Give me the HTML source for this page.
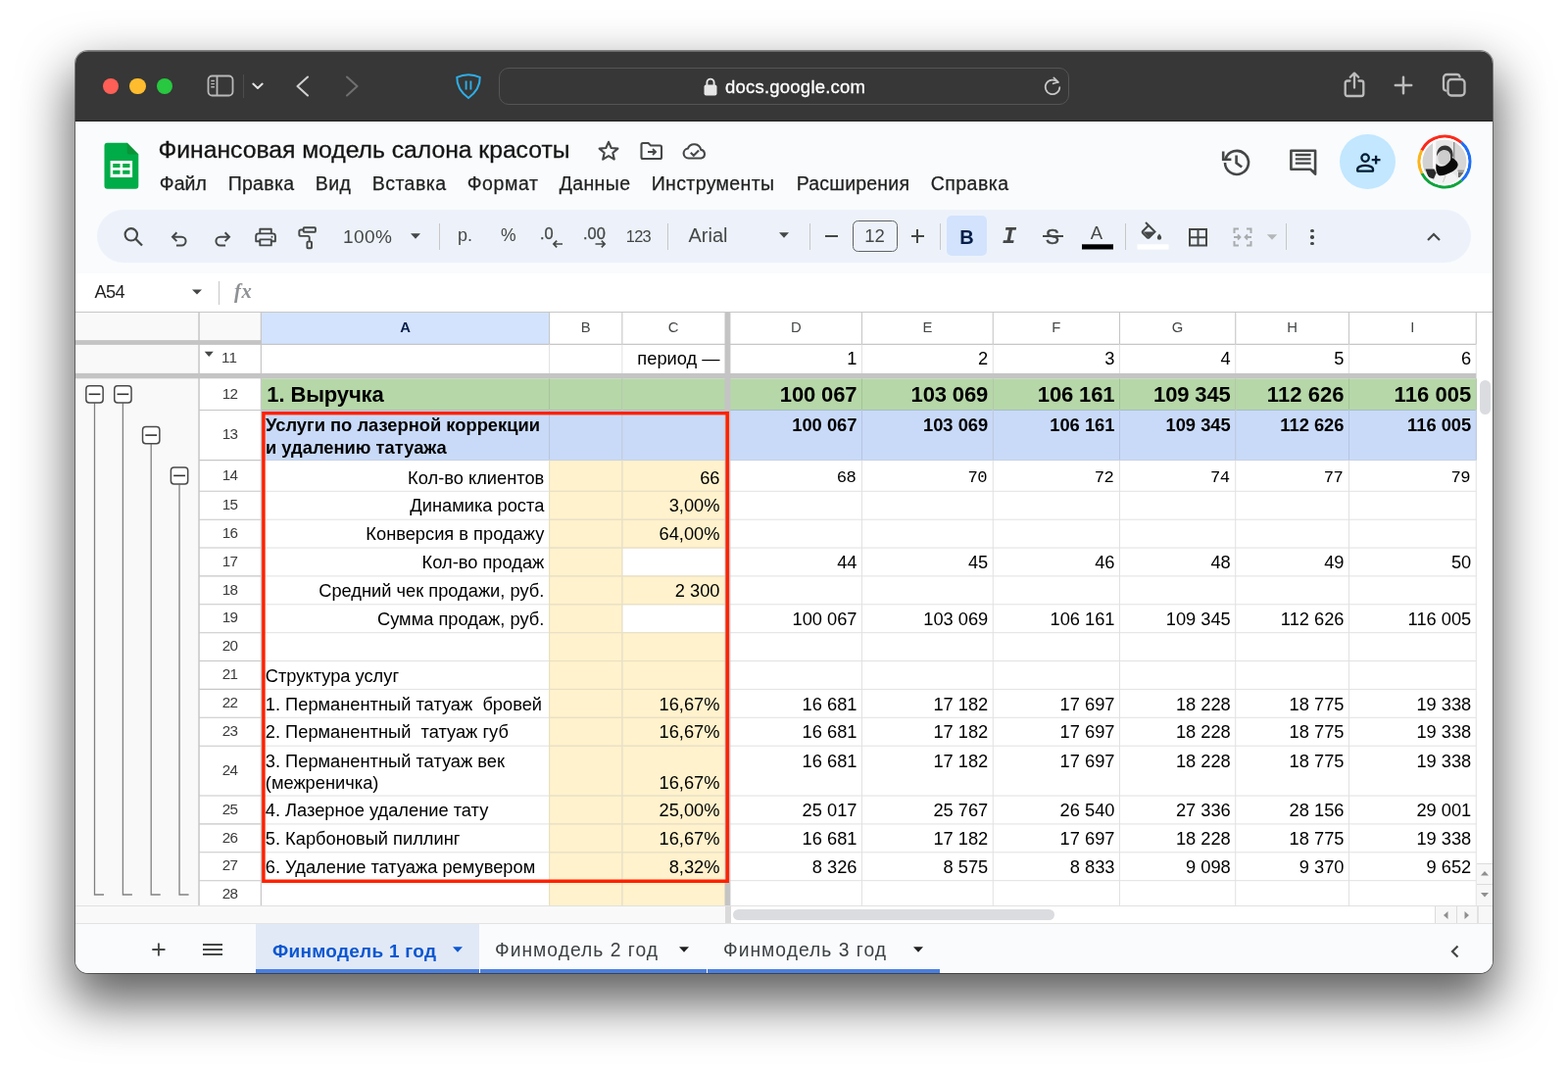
<!DOCTYPE html>
<html lang="ru"><head><meta charset="utf-8"><title>Финансовая модель салона красоты</title>
<style>
html,body{margin:0;padding:0;background:#fff}
body{width:1600px;height:1095px;position:relative;overflow:hidden;font-family:"Liberation Sans",sans-serif;}
.r{position:absolute;display:block}
.t{position:absolute;white-space:pre;color:#000}
#shadow{position:absolute;left:77px;top:52px;width:1446px;height:941px;border-radius:13px;background:#f9fbfd;box-shadow:0 0 0 1px rgba(0,0,0,.42),0 25.500px 52px 4.600px rgba(0,0,0,.62);}
#win{will-change:transform;position:absolute;left:0;top:0;width:1600px;height:1095px;clip-path:inset(52px 77px 102px 77px round 13px);}
</style></head><body>
<div id="shadow"></div>
<div id="win">
<div class="r" style="left:77px;top:52px;width:1446px;height:72px;background:#363736;"></div>
<div class="r" style="left:77px;top:123px;width:1446px;height:1px;background:#1f1f1f;"></div>
<div class="r" style="left:77px;top:52px;width:1446px;height:1px;background:#6a6b6a;"></div>
<div class="r" style="left:104.6px;top:79.85px;width:16.3px;height:16.3px;background:#fe5f57;border-radius:50%;"></div>
<div class="r" style="left:132.25px;top:79.85px;width:16.3px;height:16.3px;background:#febc2e;border-radius:50%;"></div>
<div class="r" style="left:159.6px;top:79.85px;width:16.3px;height:16.3px;background:#28c840;border-radius:50%;"></div>
<svg class="r" style="left:210px;top:75px;" width="30" height="25" viewBox="0 0 30 25"><rect x="2.5" y="2.5" width="25" height="20" rx="4" fill="none" stroke="#b9b9b9" stroke-width="1.8"/><path d="M11.5 2.5v20" stroke="#b9b9b9" stroke-width="1.8"/><path d="M5.3 7.5h3.6M5.3 10.6h3.6M5.3 13.7h3.6" stroke="#b9b9b9" stroke-width="1.4"/></svg>
<div class="r" style="left:248px;top:76px;width:1px;height:24px;background:#4b4c4b;"></div>
<svg class="r" style="left:255px;top:81px;" width="16" height="14" viewBox="0 0 16 14"><path d="M3.3 4.6L8 9l4.700-4.400" fill="none" stroke="#e4e4e4" stroke-width="2" stroke-linecap="round" stroke-linejoin="round"/></svg>
<svg class="r" style="left:298px;top:74px;" width="24" height="28" viewBox="0 0 24 28"><path d="M16 4.5L5.5 14 16 23.5" fill="none" stroke="#d0d0d0" stroke-width="2.1" stroke-linecap="round" stroke-linejoin="round"/></svg>
<svg class="r" style="left:347px;top:74px;" width="24" height="28" viewBox="0 0 24 28"><path d="M7 4.5L17.5 14 7 23.5" fill="none" stroke="#6e6f6e" stroke-width="2.1" stroke-linecap="round" stroke-linejoin="round"/></svg>
<svg class="r" style="left:462px;top:72px;" width="32" height="32" viewBox="0 0 32 32"><path d="M16 4.2c4.2 0 8 .9 11.7 2.6.3 7.6-3.3 15-11.7 21.2C7.6 21.8 4 14.4 4.3 6.8 8 5.1 11.8 4.2 16 4.2z" fill="none" stroke="#2eaee8" stroke-width="2"/><path d="M13.6 10.5v9M18.4 10.5v9" stroke="#2eaee8" stroke-width="1.9"/></svg>
<div class="r" style="left:509px;top:69px;width:582px;height:38px;background:#363736;box-sizing:border-box;border:1px solid #545554;border-radius:10px;"></div>
<svg class="r" style="left:716px;top:76px;" width="18" height="24" viewBox="0 0 18 24"><rect x="2.5" y="10.5" width="13" height="11" rx="2" fill="#e6e6e6"/><path d="M5.4 11V8.2a3.6 3.6 0 0 1 7.2 0V11" fill="none" stroke="#e6e6e6" stroke-width="1.9"/></svg>
<div class="t" style="left:740.00px;top:77.59px;font-size:18.5px;line-height:22px;color:#fff;letter-spacing:0.223px;-webkit-text-stroke:.3px #fff;">docs.google.com</div>
<svg class="r" style="left:1062px;top:76px;" width="24" height="24" viewBox="0 0 24 24"><path d="M17.6 8.2A7.3 7.3 0 1 0 19.3 13" fill="none" stroke="#c9c9c9" stroke-width="1.7" stroke-linecap="round"/><path d="M13.3 3.3l4.600 4.500-5.300 1.500" fill="none" stroke="#c9c9c9" stroke-width="1.7" stroke-linecap="round" stroke-linejoin="round"/></svg>
<svg class="r" style="left:1366px;top:70px;" width="32" height="34" viewBox="0 0 32 34"><path d="M11.500 12.500H8.900a2.200 2.200 0 0 0-2.200 2.200V25.800a2.200 2.200 0 0 0 2.200 2.200h14.200a2.200 2.200 0 0 0 2.200-2.200V14.700a2.200 2.200 0 0 0-2.200-2.200H20.500" fill="none" stroke="#bcbcbc" stroke-width="2.300" stroke-linecap="round"/><path d="M16 19.500V5M11.800 8.800L16 4.600l4.200 4.200" fill="none" stroke="#bcbcbc" stroke-width="2.300" stroke-linecap="round" stroke-linejoin="round"/></svg>
<svg class="r" style="left:1418.75px;top:73.75px;" width="26" height="26" viewBox="0 0 26 26"><path d="M13 4.800v16.400M4.800 13h16.400" stroke="#bcbcbc" stroke-width="2.500" stroke-linecap="round"/></svg>
<svg class="r" style="left:1469.0px;top:72.2px;" width="30" height="30" viewBox="0 0 30 30"><rect x="8.500" y="9" width="17" height="16.500" rx="3.500" fill="none" stroke="#bcbcbc" stroke-width="2.300"/><path d="M6.300 20.500a3 3 0 0 1-2.300-3V7.500a3.500 3.500 0 0 1 3.500-3.500h10a3 3 0 0 1 3 2.300" fill="none" stroke="#bcbcbc" stroke-width="2.300" stroke-linecap="round"/></svg>
<div class="r" style="left:77px;top:124px;width:1446px;height:195px;background:#f9fbfd;"></div>
<svg class="r" style="left:106px;top:145px;" width="36" height="49" viewBox="0 0 36 49"><path d="M3.500 .650h20.200l11.600 11.800v32.300a3 3 0 0 1-3 3H3.500a3 3 0 0 1-3-3V3.650a3 3 0 0 1 3-3z" fill="#00ac47"/><path d="M23.700 .650l11.600 11.800H26.200a2.500 2.500 0 0 1-2.500-2.500z" fill="#0b9438"/><path d="M6.600 19h22.500v16.900H6.600z M9.200 21.900v4h7.300v-4z M19.200 21.900v4h7.300v-4z M9.200 28.800v4h7.300v-4z M19.200 28.800v4h7.300v-4z" fill="#fff" fill-rule="evenodd"/></svg>
<div class="t" style="left:161.50px;top:137.92px;font-size:24.75px;line-height:30px;color:#141414;letter-spacing:-0.039px;-webkit-text-stroke:.3px #141414;">Финансовая модель салона красоты</div>
<div class="t" style="left:162.70px;top:175.94px;font-size:19.5px;line-height:23px;color:#1f1f1f;letter-spacing:0.116px;-webkit-text-stroke:.25px #1f1f1f;">Файл</div>
<div class="t" style="left:232.70px;top:175.94px;font-size:19.5px;line-height:23px;color:#1f1f1f;letter-spacing:0.285px;-webkit-text-stroke:.25px #1f1f1f;">Правка</div>
<div class="t" style="left:321.70px;top:175.94px;font-size:19.5px;line-height:23px;color:#1f1f1f;letter-spacing:0.509px;-webkit-text-stroke:.25px #1f1f1f;">Вид</div>
<div class="t" style="left:379.70px;top:175.94px;font-size:19.5px;line-height:23px;color:#1f1f1f;letter-spacing:0.469px;-webkit-text-stroke:.25px #1f1f1f;">Вставка</div>
<div class="t" style="left:476.70px;top:175.94px;font-size:19.5px;line-height:23px;color:#1f1f1f;letter-spacing:0.604px;-webkit-text-stroke:.25px #1f1f1f;">Формат</div>
<div class="t" style="left:570.70px;top:175.94px;font-size:19.5px;line-height:23px;color:#1f1f1f;letter-spacing:0.369px;-webkit-text-stroke:.25px #1f1f1f;">Данные</div>
<div class="t" style="left:664.70px;top:175.94px;font-size:19.5px;line-height:23px;color:#1f1f1f;letter-spacing:0.371px;-webkit-text-stroke:.25px #1f1f1f;">Инструменты</div>
<div class="t" style="left:812.70px;top:175.94px;font-size:19.5px;line-height:23px;color:#1f1f1f;letter-spacing:0.210px;-webkit-text-stroke:.25px #1f1f1f;">Расширения</div>
<div class="t" style="left:949.70px;top:175.94px;font-size:19.5px;line-height:23px;color:#1f1f1f;letter-spacing:0.467px;-webkit-text-stroke:.25px #1f1f1f;">Справка</div>
<svg class="r" style="left:608px;top:141px;" width="26" height="26" viewBox="0 0 26 26"><path d="M13 3.8l2.700 6.200 6.700.600-5.100 4.400 1.500 6.600L13 18.100 7.200 21.600l1.500-6.600L3.600 10.600l6.700-.600z" fill="none" stroke="#444746" stroke-width="2.1" stroke-linejoin="round"/></svg>
<svg class="r" style="left:651px;top:141px;" width="28" height="26" viewBox="0 0 28 26"><path d="M3.5 6.5a1.500 1.500 0 0 1 1.500-1.500h5.500l2.500 2.500h9.500a1.500 1.500 0 0 1 1.500 1.500v10.500a1.500 1.500 0 0 1-1.500 1.500H5a1.500 1.500 0 0 1-1.500-1.500z" fill="none" stroke="#444746" stroke-width="2.1"/><path d="M10 14h7.500M15 11l3 3-3 3" fill="none" stroke="#444746" stroke-width="1.9"/></svg>
<svg class="r" style="left:694px;top:141px;" width="30" height="26" viewBox="0 0 30 26"><path d="M8.5 20.5a5 5 0 0 1-.600-9.950 7 7 0 0 1 13.300 1.300 4.400 4.400 0 0 1 .300 8.650z" fill="none" stroke="#444746" stroke-width="2.1" stroke-linejoin="round"/><path d="M10.8 14.8l3 3 5.200-5.200" fill="none" stroke="#444746" stroke-width="2.1"/></svg>
<svg class="r" style="left:1244px;top:148.5px;" width="36" height="34" viewBox="0 0 36 34"><path d="M6.6 13.2A12 12 0 1 1 6 17" fill="none" stroke="#444746" stroke-width="2.6"/><path d="M4.2 5.5v8.200h8.200" fill="none" stroke="#444746" stroke-width="2.6"/><path d="M17.6 9.500v7.800l5.600 4.200" fill="none" stroke="#444746" stroke-width="2.6"/></svg>
<svg class="r" style="left:1312px;top:148px;" width="36" height="34" viewBox="0 0 36 34"><path d="M5.4 5.700h24.700v24l-5-5H5.400z" fill="none" stroke="#444746" stroke-width="2.6" stroke-linejoin="round"/><path d="M26 25.500l4.700 5v-5z" fill="#444746"/><path d="M9.8 10h15.800M9.800 14.400h15.800M9.800 18.700h15.800" stroke="#444746" stroke-width="2.300"/></svg>
<div class="r" style="left:1367.4px;top:136.8px;width:56.6px;height:56.6px;background:#c2e7ff;border-radius:50%;"></div>
<svg class="r" style="left:1380px;top:150px;" width="32" height="32" viewBox="0 0 32 32"><circle cx="13.1" cy="11.100" r="3.700" fill="none" stroke="#001d35" stroke-width="2.300"/><path d="M5.2 24.600v-1.800c0-2.500 4.100-3.900 7.900-3.900s7.900 1.400 7.900 3.900v1.800z" fill="none" stroke="#001d35" stroke-width="2.300" stroke-linejoin="round"/><path d="M24.1 8.800v8.800M19.700 13.200h8.800" stroke="#001d35" stroke-width="2.300"/></svg>
<svg class="r" style="left:1445.5px;top:137px;" width="56" height="56" viewBox="0 0 56 56"><defs><clipPath id="av"><circle cx="28" cy="28" r="22.400"/></clipPath></defs><path d="M4.82 16.44A25.9 25.9 0 0 1 45.09 8.54" fill="none" stroke="#fb2a1c" stroke-width="3.200"/><path d="M45.09 8.54A25.9 25.9 0 0 1 45.43 47.16" fill="none" stroke="#1f6ff5" stroke-width="3.200"/><path d="M45.43 47.16A25.9 25.9 0 0 1 4.98 39.88" fill="none" stroke="#10a33c" stroke-width="3.200"/><path d="M4.98 39.88A25.9 25.9 0 0 1 4.82 16.44" fill="none" stroke="#fbb41a" stroke-width="3.200"/><circle cx="28" cy="28" r="24.400" fill="#fff"/>
<g clip-path="url(#av)"><rect x="0" y="0" width="56" height="56" fill="#e6e6e6"/>
<rect x="5" y="8" width="11" height="30" fill="#d2d2d2"/><rect x="16" y="6" width="3.200" height="34" fill="#fafafa"/>
<rect x="37.400" y="8" width="1.100" height="22" fill="#5a5a5a"/><rect x="38.500" y="8" width="12" height="28" fill="#d6d6d6"/>
<rect x="41.500" y="36.500" width="7" height="1.400" fill="#8a8a8a"/><path d="M42 38.500h6.500l-3.500 5.500h-3z" fill="#6a6a6a"/>
<path d="M8.500 35.500h9l2 4-2.500 6-5.500-1.500z" fill="#2a2a2a"/>
<path d="M17 52c0-9 4-14 12-14s13 4 13 12v6H17z" fill="#f3f3f3"/>
<ellipse cx="27.600" cy="24" rx="6.400" ry="8.200" fill="#cdcdcd"/>
<path d="M23 30.500c1.500 2 4 2.800 6 2.300 2-.500 3.500-2.300 4-4.300l-3 3.500z" fill="#f0f0f0"/>
<path d="M20.200 22.500c-.700-6.500 3-11 8.300-11 5 0 8.500 4 8.200 11.500l-2.200-1c-1-4-3.500-6-6.500-6-3.500 0-6.500 2.500-7.800 6.500z" fill="#333"/>
<path d="M33.500 18c2 1.500 3 4.500 2.700 8l-2.200 1.500c.300-3.500 0-6.500-.500-9.500z" fill="#3c3c3c"/>
<path d="M19.500 30c2.500 3 6 3.500 9 2 3-1.500 5-4.500 7-8 3 1.500 6 4 6.200 7-.500 4-4 6.500-8.500 8.500-4 1.800-8 3.500-11 2.500-2.500-2-3.500-7-2.700-12z" fill="#0a0a0a"/>
<path d="M26.500 49l2.500-7" stroke="#c9c9c9" stroke-width="1" fill="none"/></g></svg>
<div class="r" style="left:99px;top:213.5px;width:1402px;height:54.5px;background:#edf2fa;border-radius:27.25px;"></div>
<svg class="r" style="left:123px;top:229px;" width="26" height="26" viewBox="0 0 26 26"><circle cx="10.8" cy="10.3" r="6.2" fill="none" stroke="#444746" stroke-width="2.1"/><path d="M15.3 14.8l6.700 6.700" stroke="#444746" stroke-width="2.3"/></svg>
<svg class="r" style="left:170px;top:229.5px;" width="26" height="26" viewBox="-1.800 -1.800 29.600 29.600"><path d="M6 11.5h9.500a5 5 0 0 1 0 10H9.500" fill="none" stroke="#444746" stroke-width="2.250"/><path d="M10 6.5l-5 5 5 5" fill="none" stroke="#444746" stroke-width="2.250"/></svg>
<svg class="r" style="left:214px;top:229.5px;" width="26" height="26" viewBox="-1.800 -1.800 29.600 29.600"><path d="M20 11.5h-9.500a5 5 0 0 0 0 10H16.500" fill="none" stroke="#444746" stroke-width="2.250"/><path d="M16 6.5l5 5-5 5" fill="none" stroke="#444746" stroke-width="2.250"/></svg>
<svg class="r" style="left:256px;top:228px;" width="30" height="28" viewBox="256 228 30 28"><g fill="none" stroke="#444746" stroke-width="1.9" stroke-linejoin="round"><path d="M265.3 238.4v-4.700h11.500v4.700"/><path d="M265.3 246.3h-4.100v-5.400a2.500 2.500 0 0 1 2.500-2.500h14.700a2.500 2.500 0 0 1 2.500 2.500v5.400h-4.100"/><rect x="265.3" y="244.400" width="11.500" height="6"/></g><circle cx="277.5" cy="241.700" r="1" fill="#444746"/></svg>
<svg class="r" style="left:300px;top:228px;" width="30" height="28" viewBox="300 228 30 28"><g fill="none" stroke="#444746" stroke-width="1.9" stroke-linejoin="round"><rect x="309.7" y="232.300" width="12.200" height="4.400" rx=".8"/><path d="M309.7 234.500h-2.700a1.700 1.700 0 0 0-1.700 1.700v3a1.700 1.700 0 0 0 1.700 1.700h7a1.700 1.700 0 0 1 1.700 1.700v3.600"/><rect x="313.400" y="246.600" width="4.600" height="6.600" rx=".8"/></g></svg>
<div class="t" style="left:350.00px;top:229.92px;font-size:19px;line-height:23px;color:#444746;letter-spacing:0.464px;">100%</div>
<svg class="r" style="left:416px;top:235px;" width="16" height="12" viewBox="0 0 16 12"><path d="M3 3.20h10L8 8.80z" fill="#444746"/></svg>
<div class="r" style="left:448px;top:228px;width:1px;height:27px;background:#c7c7c7;"></div>
<div class="t" style="left:467.00px;top:229.26px;font-size:18px;line-height:22px;color:#444746;">р.</div>
<div class="t" style="left:511.00px;top:229.94px;font-size:17.5px;line-height:21px;color:#444746;">%</div>
<div class="t" style="left:551.00px;top:228.32px;font-size:16.4px;line-height:20px;color:#444746;-webkit-text-stroke:.3px #444746;">.0</div>
<svg class="r" style="left:562px;top:243px;" width="14" height="12" viewBox="0 0 14 12"><path d="M12 6H3M6.200 2.700L2.900 6l3.300 3.300" fill="none" stroke="#444746" stroke-width="1.700"/></svg>
<div class="t" style="left:595.00px;top:228.32px;font-size:16.4px;line-height:20px;color:#444746;-webkit-text-stroke:.3px #444746;">.00</div>
<svg class="r" style="left:606px;top:243px;" width="14" height="12" viewBox="0 0 14 12"><path d="M1.500 6h9.500M7.800 2.700L11.100 6l-3.300 3.300" fill="none" stroke="#444746" stroke-width="1.700"/></svg>
<div class="t" style="left:638.80px;top:230.57px;font-size:16.4px;line-height:20px;color:#444746;letter-spacing:-0.780px;">123</div>
<div class="r" style="left:681px;top:228px;width:1px;height:27px;background:#c7c7c7;"></div>
<div class="t" style="left:702.50px;top:228.32px;font-size:20px;line-height:24px;color:#444746;letter-spacing:-0.004px;">Arial</div>
<svg class="r" style="left:791.5px;top:234.4px;" width="16" height="12" viewBox="0 0 16 12"><path d="M3 3.20h10L8 8.80z" fill="#444746"/></svg>
<div class="r" style="left:826px;top:228px;width:1px;height:27px;background:#c7c7c7;"></div>
<div class="r" style="left:841.5px;top:239.8px;width:13.5px;height:2px;background:#444746;"></div>
<div class="r" style="left:870px;top:224.5px;width:46px;height:32.5px;background:transparent;box-sizing:border-box;border:1.3px solid #5f6368;border-radius:5.500px;"></div>
<div class="t" style="left:882.21px;top:229.99px;font-size:18.5px;line-height:22px;color:#444746;">12</div>
<div class="r" style="left:929.5px;top:239.8px;width:13.5px;height:2px;background:#444746;"></div>
<div class="r" style="left:935.25px;top:234px;width:2px;height:13.5px;background:#444746;"></div>
<div class="r" style="left:959px;top:228px;width:1px;height:27px;background:#c7c7c7;"></div>
<div class="r" style="left:966px;top:220px;width:41px;height:41px;background:#d3e3fd;border-radius:5px;"></div>
<div class="t" style="left:979.27px;top:229.57px;font-size:20px;line-height:24px;font-weight:700;color:#041e49;">B</div>
<div class="t" style="left:1022.80px;top:227.48px;font-size:24px;line-height:29px;font-weight:700;color:#444746;font-family:'Liberation Mono',sans-serif;font-style:italic;">I</div>
<div class="t" style="left:1066.83px;top:229.15px;font-size:21.5px;line-height:26px;color:#444746;-webkit-text-stroke:.4px #444746;">S</div>
<div class="r" style="left:1063.5px;top:239.6px;width:21.5px;height:2.8px;background:#edf2fa;"></div>
<div class="r" style="left:1063.5px;top:240.2px;width:21.5px;height:1.8px;background:#444746;"></div>
<div class="t" style="left:1112.83px;top:227.09px;font-size:18.5px;line-height:22px;color:#444746;">A</div>
<svg class="r" style="left:1104px;top:249px;" width="32" height="6" viewBox="0 0 32 6"><rect x="0" y=".3" width="32" height="5.200" fill="#000"/></svg>
<div class="r" style="left:1148px;top:228px;width:1px;height:27px;background:#c7c7c7;"></div>
<svg class="r" style="left:1162px;top:222.7px;" width="28" height="26" viewBox="0 0 28 26"><path d="M7 4l9.500 9.500-6 6a1.200 1.200 0 0 1-1.700 0L4 14.700a1.200 1.200 0 0 1 0-1.700l6.500-6.500" fill="none" stroke="#444746" stroke-width="2"/><path d="M4.500 13.500h11.500l-6 6z" fill="#444746"/><path d="M21 15.500s2.200 2.600 2.200 4a2.200 2.200 0 0 1-4.400 0c0-1.400 2.200-4 2.200-4z" fill="#444746"/></svg>
<svg class="r" style="left:1160px;top:249px;" width="33" height="6" viewBox="0 0 33 6"><rect x=".5" y=".3" width="32" height="5.200" fill="#fff"/></svg>
<svg class="r" style="left:1209px;top:229px;" width="26" height="26" viewBox="0 0 26 26"><rect x="5" y="5" width="17" height="16.500" fill="none" stroke="#444746" stroke-width="2"/><path d="M13.500 5v16.500M5 13.250h17" stroke="#444746" stroke-width="2"/></svg>
<svg class="r" style="left:1255px;top:229px;" width="26" height="26" viewBox="0 0 26 26"><path d="M9 4.500H4.500V9M4.500 17v4.500H9M17 4.500h4.500V9M21.500 17v4.500H17" fill="none" stroke="#a9acae" stroke-width="2"/><path d="M4 13h6.500M8 10.500l2.500 2.500L8 15.500M22 13h-6.500M18 10.500L15.500 13l2.500 2.500" fill="none" stroke="#a9acae" stroke-width="1.800"/></svg>
<svg class="r" style="left:1289.5px;top:235.5px;" width="16" height="12" viewBox="0 0 16 12"><path d="M2.8 3.20h10.4L8 8.80z" fill="#b4b7b9"/></svg>
<div class="r" style="left:1312px;top:228px;width:1px;height:27px;background:#c7c7c7;"></div>
<div class="r" style="left:1337.3px;top:233.8px;width:3.4px;height:3.4px;background:#444746;border-radius:50%;"></div>
<div class="r" style="left:1337.3px;top:240.3px;width:3.4px;height:3.4px;background:#444746;border-radius:50%;"></div>
<div class="r" style="left:1337.3px;top:246.8px;width:3.4px;height:3.4px;background:#444746;border-radius:50%;"></div>
<svg class="r" style="left:1452.5px;top:232px;" width="20" height="20" viewBox="0 0 20 20"><path d="M4 13l6-6 6 6" fill="none" stroke="#444746" stroke-width="2.200"/></svg>
<div class="r" style="left:77px;top:279px;width:1446px;height:39px;background:#fff;"></div>
<div class="r" style="left:77px;top:318px;width:1446px;height:1px;background:#c7c7c7;"></div>
<div class="t" style="left:96.50px;top:286.89px;font-size:18.2px;line-height:22px;color:#1f1f1f;letter-spacing:-0.588px;">A54</div>
<svg class="r" style="left:192.5px;top:292.3px;" width="16" height="12" viewBox="0 0 16 12"><path d="M3 3.40h10L8 8.60z" fill="#444746"/></svg>
<div class="r" style="left:223px;top:287px;width:1px;height:24px;background:#c7c7c7;"></div>
<div class="t" style="left:239.00px;top:285.00px;font-size:20.5px;line-height:25px;font-weight:700;color:#8e9194;font-family:'Liberation Serif',sans-serif;font-style:italic;letter-spacing:.6px;">fx</div>
<div class="r" style="left:77px;top:319px;width:1446px;height:606px;background:#fff;"></div>
<div class="r" style="left:77px;top:319px;width:126px;height:606px;background:#f9f9f9;"></div>
<div class="r" style="left:203px;top:319px;width:64px;height:33px;background:#f9f9f9;"></div>
<div class="r" style="left:267px;top:319px;width:294px;height:33px;background:#d3e3fd;"></div>
<svg class="r" style="left:0px;top:0px;" width="1600" height="1095" viewBox="0 0 1600 1095"><rect x="266.85" y="386.30" width="1239.40" height="32.20" fill="#b6d7a8"/><rect x="266.85" y="418.50" width="1239.40" height="51.10" fill="#c9daf8"/><rect x="560.60" y="469.60" width="179.40" height="454.90" fill="#fff2cc"/><rect x="634.85" y="559.05" width="105.15" height="28.85" fill="#fff"/><rect x="634.85" y="616.80" width="105.15" height="28.90" fill="#fff"/><path d="M266.85 351.40H1506.25" stroke="#c6c6c6" stroke-width="1.1"/><path d="M203.05 418.50H266.35" stroke="#c6c6c6" stroke-width="1.1"/><path d="M266.85 418.50H1506.25" stroke="#a6bdc9" stroke-width="1.0"/><path d="M203.05 469.60H266.35" stroke="#c6c6c6" stroke-width="1.1"/><path d="M266.85 469.60H1506.25" stroke="#c5cfe0" stroke-width="1.0"/><path d="M203.05 501.30H266.35" stroke="#c6c6c6" stroke-width="1.1"/><path d="M266.85 501.30H1506.25" stroke="#e1e1e1" stroke-width="1.0"/><path d="M560.60 501.30H740.00" stroke="#ebdfbd" stroke-width="1.0"/><path d="M203.05 530.20H266.35" stroke="#c6c6c6" stroke-width="1.1"/><path d="M266.85 530.20H1506.25" stroke="#e1e1e1" stroke-width="1.0"/><path d="M560.60 530.20H740.00" stroke="#ebdfbd" stroke-width="1.0"/><path d="M203.05 559.05H266.35" stroke="#c6c6c6" stroke-width="1.1"/><path d="M266.85 559.05H1506.25" stroke="#e1e1e1" stroke-width="1.0"/><path d="M560.60 559.05H740.00" stroke="#ebdfbd" stroke-width="1.0"/><path d="M203.05 587.90H266.35" stroke="#c6c6c6" stroke-width="1.1"/><path d="M266.85 587.90H1506.25" stroke="#e1e1e1" stroke-width="1.0"/><path d="M560.60 587.90H740.00" stroke="#ebdfbd" stroke-width="1.0"/><path d="M203.05 616.80H266.35" stroke="#c6c6c6" stroke-width="1.1"/><path d="M266.85 616.80H1506.25" stroke="#e1e1e1" stroke-width="1.0"/><path d="M560.60 616.80H740.00" stroke="#ebdfbd" stroke-width="1.0"/><path d="M203.05 645.70H266.35" stroke="#c6c6c6" stroke-width="1.1"/><path d="M266.85 645.70H1506.25" stroke="#e1e1e1" stroke-width="1.0"/><path d="M560.60 645.70H740.00" stroke="#ebdfbd" stroke-width="1.0"/><path d="M203.05 674.55H266.35" stroke="#c6c6c6" stroke-width="1.1"/><path d="M266.85 674.55H1506.25" stroke="#e1e1e1" stroke-width="1.0"/><path d="M560.60 674.55H740.00" stroke="#ebdfbd" stroke-width="1.0"/><path d="M203.05 703.40H266.35" stroke="#c6c6c6" stroke-width="1.1"/><path d="M266.85 703.40H1506.25" stroke="#e1e1e1" stroke-width="1.0"/><path d="M560.60 703.40H740.00" stroke="#ebdfbd" stroke-width="1.0"/><path d="M203.05 732.30H266.35" stroke="#c6c6c6" stroke-width="1.1"/><path d="M266.85 732.30H1506.25" stroke="#e1e1e1" stroke-width="1.0"/><path d="M560.60 732.30H740.00" stroke="#ebdfbd" stroke-width="1.0"/><path d="M203.05 761.20H266.35" stroke="#c6c6c6" stroke-width="1.1"/><path d="M266.85 761.20H1506.25" stroke="#e1e1e1" stroke-width="1.0"/><path d="M560.60 761.20H740.00" stroke="#ebdfbd" stroke-width="1.0"/><path d="M203.05 812.05H266.35" stroke="#c6c6c6" stroke-width="1.1"/><path d="M266.85 812.05H1506.25" stroke="#e1e1e1" stroke-width="1.0"/><path d="M560.60 812.05H740.00" stroke="#ebdfbd" stroke-width="1.0"/><path d="M203.05 840.90H266.35" stroke="#c6c6c6" stroke-width="1.1"/><path d="M266.85 840.90H1506.25" stroke="#e1e1e1" stroke-width="1.0"/><path d="M560.60 840.90H740.00" stroke="#ebdfbd" stroke-width="1.0"/><path d="M203.05 869.80H266.35" stroke="#c6c6c6" stroke-width="1.1"/><path d="M266.85 869.80H1506.25" stroke="#e1e1e1" stroke-width="1.0"/><path d="M560.60 869.80H740.00" stroke="#ebdfbd" stroke-width="1.0"/><path d="M203.05 898.70H266.35" stroke="#c6c6c6" stroke-width="1.1"/><path d="M266.85 898.70H1506.25" stroke="#e1e1e1" stroke-width="1.0"/><path d="M560.60 898.70H740.00" stroke="#ebdfbd" stroke-width="1.0"/><path d="M203.05 319.00V924.50" stroke="#c6c6c6" stroke-width="1.5"/><path d="M266.35 319.00V924.50" stroke="#c6c6c6" stroke-width="1.2"/><path d="M560.60 319.00V351.40" stroke="#c6c6c6" stroke-width="1.1"/><path d="M560.60 351.40V924.50" stroke="#e1e1e1" stroke-width="1.0"/><path d="M560.60 386.30V418.50" stroke="#a3c496" stroke-width="1.0"/><path d="M560.60 418.50V469.60" stroke="#b4c4e2" stroke-width="1.0"/><path d="M560.60 469.60V924.50" stroke="#ebdfbd" stroke-width="1.0"/><path d="M634.85 319.00V351.40" stroke="#c6c6c6" stroke-width="1.1"/><path d="M634.85 351.40V924.50" stroke="#e1e1e1" stroke-width="1.0"/><path d="M634.85 386.30V418.50" stroke="#a3c496" stroke-width="1.0"/><path d="M634.85 418.50V469.60" stroke="#b4c4e2" stroke-width="1.0"/><path d="M634.85 469.60V924.50" stroke="#ebdfbd" stroke-width="1.0"/><path d="M879.50 319.00V351.40" stroke="#c6c6c6" stroke-width="1.1"/><path d="M879.50 351.40V924.50" stroke="#e1e1e1" stroke-width="1.0"/><path d="M879.50 386.30V418.50" stroke="#a3c496" stroke-width="1.0"/><path d="M879.50 418.50V469.60" stroke="#b4c4e2" stroke-width="1.0"/><path d="M1013.25 319.00V351.40" stroke="#c6c6c6" stroke-width="1.1"/><path d="M1013.25 351.40V924.50" stroke="#e1e1e1" stroke-width="1.0"/><path d="M1013.25 386.30V418.50" stroke="#a3c496" stroke-width="1.0"/><path d="M1013.25 418.50V469.60" stroke="#b4c4e2" stroke-width="1.0"/><path d="M1142.50 319.00V351.40" stroke="#c6c6c6" stroke-width="1.1"/><path d="M1142.50 351.40V924.50" stroke="#e1e1e1" stroke-width="1.0"/><path d="M1142.50 386.30V418.50" stroke="#a3c496" stroke-width="1.0"/><path d="M1142.50 418.50V469.60" stroke="#b4c4e2" stroke-width="1.0"/><path d="M1260.75 319.00V351.40" stroke="#c6c6c6" stroke-width="1.1"/><path d="M1260.75 351.40V924.50" stroke="#e1e1e1" stroke-width="1.0"/><path d="M1260.75 386.30V418.50" stroke="#a3c496" stroke-width="1.0"/><path d="M1260.75 418.50V469.60" stroke="#b4c4e2" stroke-width="1.0"/><path d="M1376.50 319.00V351.40" stroke="#c6c6c6" stroke-width="1.1"/><path d="M1376.50 351.40V924.50" stroke="#e1e1e1" stroke-width="1.0"/><path d="M1376.50 386.30V418.50" stroke="#a3c496" stroke-width="1.0"/><path d="M1376.50 418.50V469.60" stroke="#b4c4e2" stroke-width="1.0"/><path d="M1506.25 319.00V351.40" stroke="#c6c6c6" stroke-width="1.1"/><path d="M1506.25 351.40V924.50" stroke="#e1e1e1" stroke-width="1.0"/><path d="M1506.25 386.30V418.50" stroke="#a3c496" stroke-width="1.0"/><path d="M1506.25 418.50V469.60" stroke="#b4c4e2" stroke-width="1.0"/><rect x="77.00" y="347.10" width="189.90" height="4.80" fill="#c4c4c4"/><rect x="77.00" y="380.90" width="1429.25" height="5.40" fill="#c4c4c4"/><rect x="739.50" y="319.00" width="5.90" height="605.50" fill="#c4c4c4"/></svg>
<div class="t" style="left:408.13px;top:325.27px;font-size:14.8px;line-height:18px;font-weight:700;color:#041e49;">A</div>
<div class="t" style="left:592.79px;top:325.27px;font-size:14.8px;line-height:18px;color:#444746;">B</div>
<div class="t" style="left:681.83px;top:325.27px;font-size:14.8px;line-height:18px;color:#444746;">C</div>
<div class="t" style="left:807.11px;top:325.27px;font-size:14.8px;line-height:18px;color:#444746;">D</div>
<div class="t" style="left:941.44px;top:325.27px;font-size:14.8px;line-height:18px;color:#444746;">E</div>
<div class="t" style="left:1073.35px;top:325.27px;font-size:14.8px;line-height:18px;color:#444746;">F</div>
<div class="t" style="left:1195.87px;top:325.27px;font-size:14.8px;line-height:18px;color:#444746;">G</div>
<div class="t" style="left:1313.28px;top:325.27px;font-size:14.8px;line-height:18px;color:#444746;">H</div>
<div class="t" style="left:1439.31px;top:325.27px;font-size:14.8px;line-height:18px;color:#444746;">I</div>
<svg class="r" style="left:207px;top:357px;" width="12" height="10" viewBox="0 0 12 10"><path d="M1.700 1.800h9.100L6.250 7z" fill="#444746"/></svg>
<div class="t" style="left:226.10px;top:355.73px;font-size:15.2px;line-height:18px;color:#3a3a3a;letter-spacing:0.034px;">11</div>
<div class="t" style="left:650.33px;top:355.07px;font-size:18.28px;line-height:22px;">период —</div>
<div class="t" style="left:864.33px;top:355.07px;font-size:18.28px;line-height:22px;">1</div>
<div class="t" style="left:998.08px;top:355.07px;font-size:18.28px;line-height:22px;">2</div>
<div class="t" style="left:1127.33px;top:355.07px;font-size:18.28px;line-height:22px;">3</div>
<div class="t" style="left:1245.58px;top:355.07px;font-size:18.28px;line-height:22px;">4</div>
<div class="t" style="left:1361.33px;top:355.07px;font-size:18.28px;line-height:22px;">5</div>
<div class="t" style="left:1491.08px;top:355.07px;font-size:18.28px;line-height:22px;">6</div>
<div class="t" style="left:226.65px;top:392.63px;font-size:15.2px;line-height:18px;color:#3a3a3a;letter-spacing:-0.606px;">12</div>
<div class="t" style="left:226.65px;top:434.28px;font-size:15.2px;line-height:18px;color:#3a3a3a;letter-spacing:-0.606px;">13</div>
<div class="t" style="left:226.65px;top:475.68px;font-size:15.2px;line-height:18px;color:#3a3a3a;letter-spacing:-0.606px;">14</div>
<div class="t" style="left:226.65px;top:505.98px;font-size:15.2px;line-height:18px;color:#3a3a3a;letter-spacing:-0.606px;">15</div>
<div class="t" style="left:226.65px;top:534.86px;font-size:15.2px;line-height:18px;color:#3a3a3a;letter-spacing:-0.606px;">16</div>
<div class="t" style="left:226.65px;top:563.71px;font-size:15.2px;line-height:18px;color:#3a3a3a;letter-spacing:-0.606px;">17</div>
<div class="t" style="left:226.65px;top:592.58px;font-size:15.2px;line-height:18px;color:#3a3a3a;letter-spacing:-0.606px;">18</div>
<div class="t" style="left:226.65px;top:621.48px;font-size:15.2px;line-height:18px;color:#3a3a3a;letter-spacing:-0.606px;">19</div>
<div class="t" style="left:226.65px;top:650.36px;font-size:15.2px;line-height:18px;color:#3a3a3a;letter-spacing:-0.606px;">20</div>
<div class="t" style="left:226.65px;top:679.21px;font-size:15.2px;line-height:18px;color:#3a3a3a;letter-spacing:-0.606px;">21</div>
<div class="t" style="left:226.65px;top:708.08px;font-size:15.2px;line-height:18px;color:#3a3a3a;letter-spacing:-0.606px;">22</div>
<div class="t" style="left:226.65px;top:736.98px;font-size:15.2px;line-height:18px;color:#3a3a3a;letter-spacing:-0.606px;">23</div>
<div class="t" style="left:226.65px;top:776.86px;font-size:15.2px;line-height:18px;color:#3a3a3a;letter-spacing:-0.606px;">24</div>
<div class="t" style="left:226.65px;top:816.71px;font-size:15.2px;line-height:18px;color:#3a3a3a;letter-spacing:-0.606px;">25</div>
<div class="t" style="left:226.65px;top:845.58px;font-size:15.2px;line-height:18px;color:#3a3a3a;letter-spacing:-0.606px;">26</div>
<div class="t" style="left:226.65px;top:874.48px;font-size:15.2px;line-height:18px;color:#3a3a3a;letter-spacing:-0.606px;">27</div>
<div class="t" style="left:226.65px;top:902.73px;font-size:15.2px;line-height:18px;color:#3a3a3a;letter-spacing:-0.606px;">28</div>
<div class="t" style="left:272.30px;top:390.18px;font-size:22px;line-height:26px;font-weight:700;letter-spacing:-0.127px;">1. Выручка</div>
<div class="t" style="left:795.80px;top:390.18px;font-size:22px;line-height:26px;font-weight:700;letter-spacing:-0.139px;">100 067</div>
<div class="t" style="left:808.23px;top:423.25px;font-size:18.33px;line-height:22px;font-weight:700;">100 067</div>
<div class="t" style="left:929.55px;top:390.18px;font-size:22px;line-height:26px;font-weight:700;letter-spacing:-0.139px;">103 069</div>
<div class="t" style="left:941.98px;top:423.25px;font-size:18.33px;line-height:22px;font-weight:700;">103 069</div>
<div class="t" style="left:1058.80px;top:390.18px;font-size:22px;line-height:26px;font-weight:700;letter-spacing:-0.139px;">106 161</div>
<div class="t" style="left:1071.23px;top:423.25px;font-size:18.33px;line-height:22px;font-weight:700;">106 161</div>
<div class="t" style="left:1177.05px;top:390.18px;font-size:22px;line-height:26px;font-weight:700;letter-spacing:-0.139px;">109 345</div>
<div class="t" style="left:1189.48px;top:423.25px;font-size:18.33px;line-height:22px;font-weight:700;">109 345</div>
<div class="t" style="left:1292.80px;top:390.18px;font-size:22px;line-height:26px;font-weight:700;letter-spacing:0.065px;">112 626</div>
<div class="t" style="left:1306.25px;top:423.25px;font-size:18.33px;line-height:22px;font-weight:700;">112 626</div>
<div class="t" style="left:1422.55px;top:390.18px;font-size:22px;line-height:26px;font-weight:700;letter-spacing:0.065px;">116 005</div>
<div class="t" style="left:1436.00px;top:423.25px;font-size:18.33px;line-height:22px;font-weight:700;">116 005</div>
<div class="t" style="left:271.00px;top:423.25px;font-size:18.33px;line-height:22px;font-weight:700;">Услуги по лазерной коррекции</div>
<div class="t" style="left:271.00px;top:445.55px;font-size:18.33px;line-height:22px;font-weight:700;">и удалению татуажа</div>
<div class="t" style="left:416.10px;top:476.57px;font-size:18.28px;line-height:22px;">Кол-во клиентов</div>
<div class="t" style="left:714.17px;top:476.57px;font-size:18.28px;line-height:22px;">66</div>
<div class="t" style="left:853.86px;top:477.14px;font-size:17.2px;line-height:21px;font-family:'Liberation Mono',sans-serif;letter-spacing:-0.6px;">68</div>
<div class="t" style="left:987.61px;top:477.14px;font-size:17.2px;line-height:21px;font-family:'Liberation Mono',sans-serif;letter-spacing:-0.6px;">70</div>
<div class="t" style="left:1116.86px;top:477.14px;font-size:17.2px;line-height:21px;font-family:'Liberation Mono',sans-serif;letter-spacing:-0.6px;">72</div>
<div class="t" style="left:1235.11px;top:477.14px;font-size:17.2px;line-height:21px;font-family:'Liberation Mono',sans-serif;letter-spacing:-0.6px;">74</div>
<div class="t" style="left:1350.86px;top:477.14px;font-size:17.2px;line-height:21px;font-family:'Liberation Mono',sans-serif;letter-spacing:-0.6px;">77</div>
<div class="t" style="left:1480.61px;top:477.14px;font-size:17.2px;line-height:21px;font-family:'Liberation Mono',sans-serif;letter-spacing:-0.6px;">79</div>
<div class="t" style="left:418.32px;top:505.47px;font-size:18.28px;line-height:22px;">Динамика роста</div>
<div class="t" style="left:682.70px;top:505.47px;font-size:18.28px;line-height:22px;">3,00%</div>
<div class="t" style="left:373.33px;top:534.32px;font-size:18.28px;line-height:22px;">Конверсия в продажу</div>
<div class="t" style="left:672.55px;top:534.32px;font-size:18.28px;line-height:22px;">64,00%</div>
<div class="t" style="left:430.58px;top:563.17px;font-size:18.28px;line-height:22px;">Кол-во продаж</div>
<div class="t" style="left:854.17px;top:563.17px;font-size:18.28px;line-height:22px;">44</div>
<div class="t" style="left:987.92px;top:563.17px;font-size:18.28px;line-height:22px;">45</div>
<div class="t" style="left:1117.17px;top:563.17px;font-size:18.28px;line-height:22px;">46</div>
<div class="t" style="left:1235.42px;top:563.17px;font-size:18.28px;line-height:22px;">48</div>
<div class="t" style="left:1351.17px;top:563.17px;font-size:18.28px;line-height:22px;">49</div>
<div class="t" style="left:1480.92px;top:563.17px;font-size:18.28px;line-height:22px;">50</div>
<div class="t" style="left:325.19px;top:592.07px;font-size:18.28px;line-height:22px;">Средний чек продажи, руб.</div>
<div class="t" style="left:688.78px;top:592.07px;font-size:18.28px;line-height:22px;">2 300</div>
<div class="t" style="left:385.00px;top:620.97px;font-size:18.28px;line-height:22px;">Сумма продаж, руб.</div>
<div class="t" style="left:808.47px;top:620.97px;font-size:18.28px;line-height:22px;">100 067</div>
<div class="t" style="left:942.22px;top:620.97px;font-size:18.28px;line-height:22px;">103 069</div>
<div class="t" style="left:1071.47px;top:620.97px;font-size:18.28px;line-height:22px;">106 161</div>
<div class="t" style="left:1189.72px;top:620.97px;font-size:18.28px;line-height:22px;">109 345</div>
<div class="t" style="left:1306.83px;top:620.97px;font-size:18.28px;line-height:22px;">112 626</div>
<div class="t" style="left:1436.58px;top:620.97px;font-size:18.28px;line-height:22px;">116 005</div>
<div class="t" style="left:270.80px;top:678.67px;font-size:18.28px;line-height:22px;">Структура услуг</div>
<div class="t" style="left:270.80px;top:707.57px;font-size:18.28px;line-height:22px;">1. Перманентный татуаж  бровей</div>
<div class="t" style="left:672.55px;top:707.57px;font-size:18.28px;line-height:22px;">16,67%</div>
<div class="t" style="left:818.62px;top:707.57px;font-size:18.28px;line-height:22px;">16 681</div>
<div class="t" style="left:952.38px;top:707.57px;font-size:18.28px;line-height:22px;">17 182</div>
<div class="t" style="left:1081.62px;top:707.57px;font-size:18.28px;line-height:22px;">17 697</div>
<div class="t" style="left:1199.88px;top:707.57px;font-size:18.28px;line-height:22px;">18 228</div>
<div class="t" style="left:1315.62px;top:707.57px;font-size:18.28px;line-height:22px;">18 775</div>
<div class="t" style="left:1445.38px;top:707.57px;font-size:18.28px;line-height:22px;">19 338</div>
<div class="t" style="left:270.80px;top:736.47px;font-size:18.28px;line-height:22px;">2. Перманентный  татуаж губ</div>
<div class="t" style="left:672.55px;top:736.47px;font-size:18.28px;line-height:22px;">16,67%</div>
<div class="t" style="left:818.62px;top:736.47px;font-size:18.28px;line-height:22px;">16 681</div>
<div class="t" style="left:952.38px;top:736.47px;font-size:18.28px;line-height:22px;">17 182</div>
<div class="t" style="left:1081.62px;top:736.47px;font-size:18.28px;line-height:22px;">17 697</div>
<div class="t" style="left:1199.88px;top:736.47px;font-size:18.28px;line-height:22px;">18 228</div>
<div class="t" style="left:1315.62px;top:736.47px;font-size:18.28px;line-height:22px;">18 775</div>
<div class="t" style="left:1445.38px;top:736.47px;font-size:18.28px;line-height:22px;">19 338</div>
<div class="t" style="left:270.80px;top:765.77px;font-size:18.28px;line-height:22px;">3. Перманентный татуаж век</div>
<div class="t" style="left:270.80px;top:787.57px;font-size:18.28px;line-height:22px;">(межреничка)</div>
<div class="t" style="left:672.55px;top:787.57px;font-size:18.28px;line-height:22px;">16,67%</div>
<div class="t" style="left:818.62px;top:765.77px;font-size:18.28px;line-height:22px;">16 681</div>
<div class="t" style="left:952.38px;top:765.77px;font-size:18.28px;line-height:22px;">17 182</div>
<div class="t" style="left:1081.62px;top:765.77px;font-size:18.28px;line-height:22px;">17 697</div>
<div class="t" style="left:1199.88px;top:765.77px;font-size:18.28px;line-height:22px;">18 228</div>
<div class="t" style="left:1315.62px;top:765.77px;font-size:18.28px;line-height:22px;">18 775</div>
<div class="t" style="left:1445.38px;top:765.77px;font-size:18.28px;line-height:22px;">19 338</div>
<div class="t" style="left:270.80px;top:816.17px;font-size:18.28px;line-height:22px;">4. Лазерное удаление тату</div>
<div class="t" style="left:672.55px;top:816.17px;font-size:18.28px;line-height:22px;">25,00%</div>
<div class="t" style="left:818.62px;top:816.17px;font-size:18.28px;line-height:22px;">25 017</div>
<div class="t" style="left:952.38px;top:816.17px;font-size:18.28px;line-height:22px;">25 767</div>
<div class="t" style="left:1081.62px;top:816.17px;font-size:18.28px;line-height:22px;">26 540</div>
<div class="t" style="left:1199.88px;top:816.17px;font-size:18.28px;line-height:22px;">27 336</div>
<div class="t" style="left:1315.62px;top:816.17px;font-size:18.28px;line-height:22px;">28 156</div>
<div class="t" style="left:1445.38px;top:816.17px;font-size:18.28px;line-height:22px;">29 001</div>
<div class="t" style="left:270.80px;top:845.07px;font-size:18.28px;line-height:22px;">5. Карбоновый пиллинг</div>
<div class="t" style="left:672.55px;top:845.07px;font-size:18.28px;line-height:22px;">16,67%</div>
<div class="t" style="left:818.62px;top:845.07px;font-size:18.28px;line-height:22px;">16 681</div>
<div class="t" style="left:952.38px;top:845.07px;font-size:18.28px;line-height:22px;">17 182</div>
<div class="t" style="left:1081.62px;top:845.07px;font-size:18.28px;line-height:22px;">17 697</div>
<div class="t" style="left:1199.88px;top:845.07px;font-size:18.28px;line-height:22px;">18 228</div>
<div class="t" style="left:1315.62px;top:845.07px;font-size:18.28px;line-height:22px;">18 775</div>
<div class="t" style="left:1445.38px;top:845.07px;font-size:18.28px;line-height:22px;">19 338</div>
<div class="t" style="left:270.80px;top:873.97px;font-size:18.28px;line-height:22px;">6. Удаление татуажа ремувером</div>
<div class="t" style="left:682.70px;top:873.97px;font-size:18.28px;line-height:22px;">8,32%</div>
<div class="t" style="left:828.78px;top:873.97px;font-size:18.28px;line-height:22px;">8 326</div>
<div class="t" style="left:962.53px;top:873.97px;font-size:18.28px;line-height:22px;">8 575</div>
<div class="t" style="left:1091.78px;top:873.97px;font-size:18.28px;line-height:22px;">8 833</div>
<div class="t" style="left:1210.03px;top:873.97px;font-size:18.28px;line-height:22px;">9 098</div>
<div class="t" style="left:1325.78px;top:873.97px;font-size:18.28px;line-height:22px;">9 370</div>
<div class="t" style="left:1455.53px;top:873.97px;font-size:18.28px;line-height:22px;">9 652</div>
<svg class="r" style="left:0px;top:0px;" width="1600" height="1095" viewBox="0 0 1600 1095"><rect x="268.90" y="421.65" width="473.30" height="477.60" fill="none" stroke="#ff2100" stroke-width="3.500"/><path d="M96.50 411.30V913H106.00" fill="none" stroke="#808080" stroke-width="1.300"/><rect x="87.85" y="393.80" width="17.300" height="17.100" rx="3.200" fill="#fff" stroke="#4a4a4a" stroke-width="1.500"/><path d="M90.60 402.30h11.800" stroke="#333" stroke-width="1.600"/><path d="M125.40 411.30V913H134.90" fill="none" stroke="#808080" stroke-width="1.300"/><rect x="116.75" y="393.80" width="17.300" height="17.100" rx="3.200" fill="#fff" stroke="#4a4a4a" stroke-width="1.500"/><path d="M119.50 402.30h11.800" stroke="#333" stroke-width="1.600"/><path d="M154.20 453.10V913H163.70" fill="none" stroke="#808080" stroke-width="1.300"/><rect x="145.55" y="435.60" width="17.300" height="17.100" rx="3.200" fill="#fff" stroke="#4a4a4a" stroke-width="1.500"/><path d="M148.30 444.10h11.800" stroke="#333" stroke-width="1.600"/><path d="M183.05 494.40V913H192.55" fill="none" stroke="#808080" stroke-width="1.300"/><rect x="174.40" y="476.90" width="17.300" height="17.100" rx="3.200" fill="#fff" stroke="#4a4a4a" stroke-width="1.500"/><path d="M177.15 485.40h11.800" stroke="#333" stroke-width="1.600"/></svg>
<div class="r" style="left:1507px;top:319px;width:16px;height:606px;background:#fff;"></div>
<div class="r" style="left:1510px;top:388px;width:11px;height:35px;background:#dadce0;border-radius:6px;"></div>
<div class="r" style="left:1507px;top:881px;width:16px;height:44px;background:#f7f7f7;"></div>
<div class="r" style="left:1507px;top:881px;width:16px;height:1px;background:#dcdcdc;"></div>
<div class="r" style="left:1507px;top:902px;width:16px;height:1px;background:#dcdcdc;"></div>
<svg class="r" style="left:1509px;top:886px;" width="12" height="10" viewBox="0 0 12 10"><path d="M2 7.500L6 3l4 4.500z" fill="#8f8f8f"/></svg>
<svg class="r" style="left:1509px;top:908px;" width="12" height="10" viewBox="0 0 12 10"><path d="M2 3L6 7.500 10 3z" fill="#8f8f8f"/></svg>
<div class="r" style="left:77px;top:925px;width:1446px;height:18px;background:#f9f9f9;"></div>
<div class="r" style="left:746px;top:925px;width:777px;height:18px;background:#fff;"></div>
<div class="r" style="left:77px;top:924px;width:1446px;height:1px;background:#e0e0e0;"></div>
<div class="r" style="left:77px;top:942px;width:1446px;height:1px;background:#e3e3e3;"></div>
<div class="r" style="left:739.5px;top:925px;width:6px;height:17px;background:#dadada;"></div>
<div class="r" style="left:748px;top:927.5px;width:328px;height:11px;background:#dadce0;border-radius:6px;"></div>
<div class="r" style="left:1464px;top:925px;width:59px;height:17px;background:#f7f7f7;"></div>
<div class="r" style="left:1464px;top:925px;width:1px;height:17px;background:#dcdcdc;"></div>
<div class="r" style="left:1486px;top:925px;width:1px;height:17px;background:#dcdcdc;"></div>
<div class="r" style="left:1507px;top:925px;width:2px;height:17px;background:#e2e2e2;"></div>
<svg class="r" style="left:1469px;top:927.5px;" width="12" height="12" viewBox="0 0 12 12"><path d="M8.500 2L4 6l4.500 4z" fill="#8f8f8f"/></svg>
<svg class="r" style="left:1491px;top:927.5px;" width="12" height="12" viewBox="0 0 12 12"><path d="M3.500 2L8 6l-4.500 4z" fill="#8f8f8f"/></svg>
<div class="r" style="left:77px;top:943px;width:1446px;height:50px;background:#f9fbfd;"></div>
<svg class="r" style="left:153px;top:960px;" width="18" height="18" viewBox="0 0 18 18"><path d="M2.300 9h13.200M8.900 2.400v13.200" stroke="#444746" stroke-width="1.900"/></svg>
<div class="r" style="left:207px;top:963px;width:19.5px;height:2px;background:#444746;"></div>
<div class="r" style="left:207px;top:968px;width:19.5px;height:2px;background:#444746;"></div>
<div class="r" style="left:207px;top:973px;width:19.5px;height:2px;background:#444746;"></div>
<div class="r" style="left:261px;top:943px;width:228px;height:50px;background:#e1e9f7;"></div>
<div class="r" style="left:261px;top:989px;width:228px;height:4px;background:#4a7fe0;"></div>
<div class="r" style="left:490px;top:989px;width:231px;height:4px;background:#4a7fe0;"></div>
<div class="r" style="left:722px;top:989px;width:237px;height:4px;background:#4a7fe0;"></div>
<div class="t" style="left:278.00px;top:958.52px;font-size:19px;line-height:23px;font-weight:700;color:#0b57d0;letter-spacing:0.277px;">Финмодель 1 год</div>
<svg class="r" style="left:459px;top:963.3px;" width="16" height="12" viewBox="0 0 16 12"><path d="M3 3.25h10L8 8.75z" fill="#0b57d0"/></svg>
<div class="t" style="left:505.00px;top:958.41px;font-size:19.3px;line-height:23px;color:#3c4043;letter-spacing:1.010px;">Финмодель 2 год</div>
<svg class="r" style="left:690px;top:963.3px;" width="16" height="12" viewBox="0 0 16 12"><path d="M3 3.25h10L8 8.75z" fill="#1f1f1f"/></svg>
<div class="t" style="left:738.00px;top:958.41px;font-size:19.3px;line-height:23px;color:#3c4043;letter-spacing:1.010px;">Финмодель 3 год</div>
<svg class="r" style="left:929px;top:963.3px;" width="16" height="12" viewBox="0 0 16 12"><path d="M3 3.25h10L8 8.75z" fill="#1f1f1f"/></svg>
<svg class="r" style="left:1475px;top:961.2px;" width="20" height="20" viewBox="0 0 20 20"><path d="M12.500 4.500L7 10l5.500 5.500" fill="none" stroke="#444746" stroke-width="2.200"/></svg>
</div>
</body></html>
